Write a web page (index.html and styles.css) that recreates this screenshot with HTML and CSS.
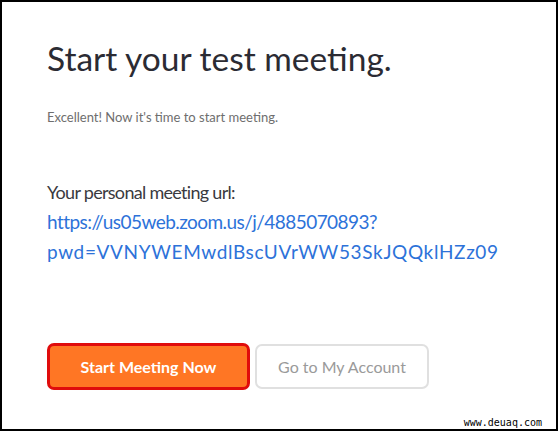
FILE: index.html
```html
<!DOCTYPE html>
<html>
<head>
<meta charset="utf-8">
<link rel="stylesheet" href="styles.css">
</head>
<body>
<div class="frame">
  <main class="content">
    <h1 class="title">Start your test meeting.</h1>
    <p class="subtitle">Excellent! Now it's time to start meeting.</p>
    <section class="url-block">
      <div class="url-label">Your personal meeting url:</div>
      <a class="url-link" href="#"><span class="url-line1">https://us05web.zoom.us/j/4885070893?</span><br><span class="url-line2">pwd=VVNYWEMwdlBscUVrWW53SkJQQklHZz09</span></a>
    </section>
    <div class="actions">
      <button class="btn btn-primary">Start Meeting Now</button>
      <button class="btn btn-secondary">Go to My Account</button>
    </div>
  </main>
  <div class="watermark">www.deuaq.com</div>
</div>
</body>
</html>
```
FILE: styles.css
```css
html, body {
  margin: 0;
  padding: 0;
  background: #fff;
}
.frame {
  position: relative;
  box-sizing: border-box;
  width: 558px;
  height: 431px;
  border: 2px solid #000;
  background: #fff;
  font-family: Lato, "Open Sans", sans-serif;
}
.content {
  padding: 34px 0 0 45px;
}
.title {
  margin: 0;
  font-size: 33.5px;
  font-weight: 400;
  line-height: 44px;
  color: #2b2b33;
}
.subtitle {
  margin: 29px 0 0;
  font-size: 13px;
  line-height: 16px;
  color: #6e6e6e;
}
.url-block {
  margin-top: 52px;
  font-size: 19px;
  line-height: 30px;
}
.url-label {
  font-size: 18px;
  letter-spacing: -0.7px;
  color: #3a3a40;
}
.url-link {
  color: #2d72d9;
  text-decoration: none;
}
.url-line1 {
  letter-spacing: -0.55px;
}
.url-line2 {
  letter-spacing: 0.65px;
}
.actions {
  display: flex;
  gap: 5px;
  margin-top: 76px;
}
.btn {
  box-sizing: border-box;
  height: 47px;
  border-radius: 7px;
  font-family: Lato, "Open Sans", sans-serif;
  font-size: 16px;
  padding: 0;
  cursor: pointer;
}
.btn-primary {
  width: 203px;
  background: #ff7624;
  border: 3px solid #e00c0c;
  color: #fff;
  font-weight: 700;
}
.btn-secondary {
  width: 174px;
  height: 45px;
  margin-top: 1px;
  background: #fff;
  border: 2px solid #e0e0e0;
  color: #9a9a9a;
  font-weight: 400;
}
.watermark {
  position: absolute;
  right: 14px;
  bottom: 1px;
  font-family: "DejaVu Sans Mono", monospace;
  font-size: 10px;
  color: #000;
}
```
